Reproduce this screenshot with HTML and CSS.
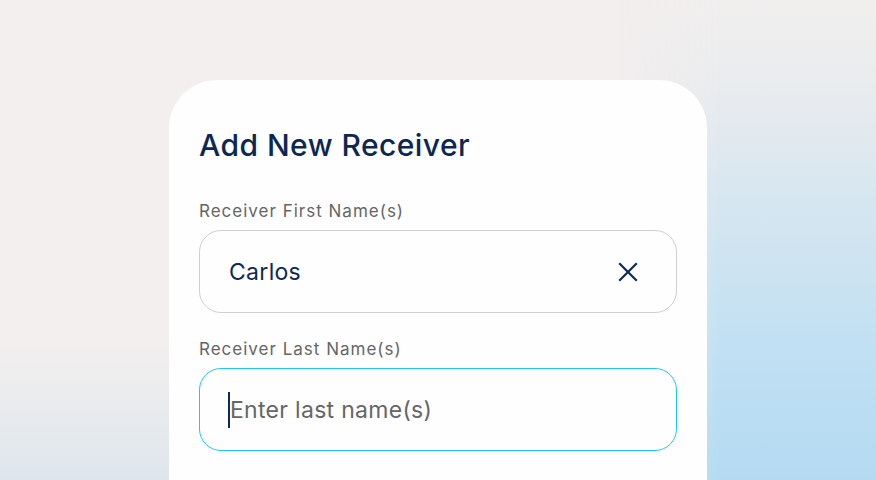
FILE: index.html
```html
<!DOCTYPE html>
<html lang="en">
<head>
  <meta charset="UTF-8">
  <meta name="viewport" content="width=device-width, initial-scale=1.0">
  <title>Add New Receiver</title>
  <link rel="stylesheet" href="styles.css">
</head>
<body>
<div class="page">
  <div class="card">
    <h1 class="title">Add New Receiver</h1>

    <!-- First name -->
    <label class="field-label">Receiver First Name(s)</label>
    <div class="input-box">
      <span class="input-value">Carlos</span>
      <svg class="clear-icon" width="20" height="20" viewBox="0 0 20 20">
        <path d="M2 2 L18 18 M18 2 L2 18" stroke="#0c2a57" stroke-width="2.2" stroke-linecap="square" fill="none"/>
      </svg>
    </div>

    <!-- Last name -->
    <label class="field-label">Receiver Last Name(s)</label>
    <div class="input-box focused">
      <span class="caret"></span>
      <span class="input-placeholder">Enter last name(s)</span>
    </div>
  </div>
</div>
</body>
</html>
```

FILE: styles.css
```css
html, body {
  margin: 0;
  height: 100%;
}
body {
  font-family: 'Inter', 'Liberation Sans', sans-serif;
  background: linear-gradient(to bottom, #f2efee 0%, #f2efee 72%, #dee6ed 100%);
  overflow: hidden;
  position: relative;
}
/* blue wash on the right side of the backdrop */
body::before {
  content: '';
  position: absolute;
  top: 0;
  right: 0;
  width: 260px;
  height: 100%;
  background: linear-gradient(to bottom, #f1efee 0%, #e8ebee 20%, #d6e6f0 42%, #c8e2f2 62%, #bcdef3 82%, #b4daf1 100%);
  -webkit-mask-image: linear-gradient(to right, transparent 0%, black 40%);
  mask-image: linear-gradient(to right, transparent 0%, black 40%);
}
.page {
  position: relative;
  z-index: 1;
  display: flex;
  justify-content: center;
  padding-top: 80px;
}
.card {
  background: #fefefe;
  width: 478px;
  padding: 47px 30px 40px 30px;
  border-radius: 48px 48px 0 0;
  min-height: 400px;
  display: flex;
  flex-direction: column;
}
.title {
  margin: 0;
  font-size: 30px;
  line-height: 36px;
  font-weight: 500;
  color: #0c2754;
  letter-spacing: 0.45px;
}
.field-label {
  display: block;
  font-size: 17px;
  line-height: 20px;
  color: #666666;
  letter-spacing: 1px;
  margin-top: 38px;
  margin-bottom: 9px;
}
.input-box + .field-label {
  margin-top: 26px;
}
.input-box {
  box-sizing: border-box;
  height: 83px;
  border: 1.5px solid #cfcfcf;
  border-radius: 22px;
  display: flex;
  align-items: center;
  padding: 0 38px 0 29px;
}
.input-box.focused {
  border: 1.5px solid #1ec6f6;
}
.input-value {
  flex: 1;
  font-size: 23px;
  letter-spacing: 0.3px;
  color: #0c2a57;
}
.clear-icon {
  flex: none;
}
.caret {
  width: 2px;
  height: 36px;
  background: #0c2a57;
  margin-left: -1px;
}
.input-placeholder {
  font-size: 23px;
  letter-spacing: 0.3px;
  color: #666666;
}
```
